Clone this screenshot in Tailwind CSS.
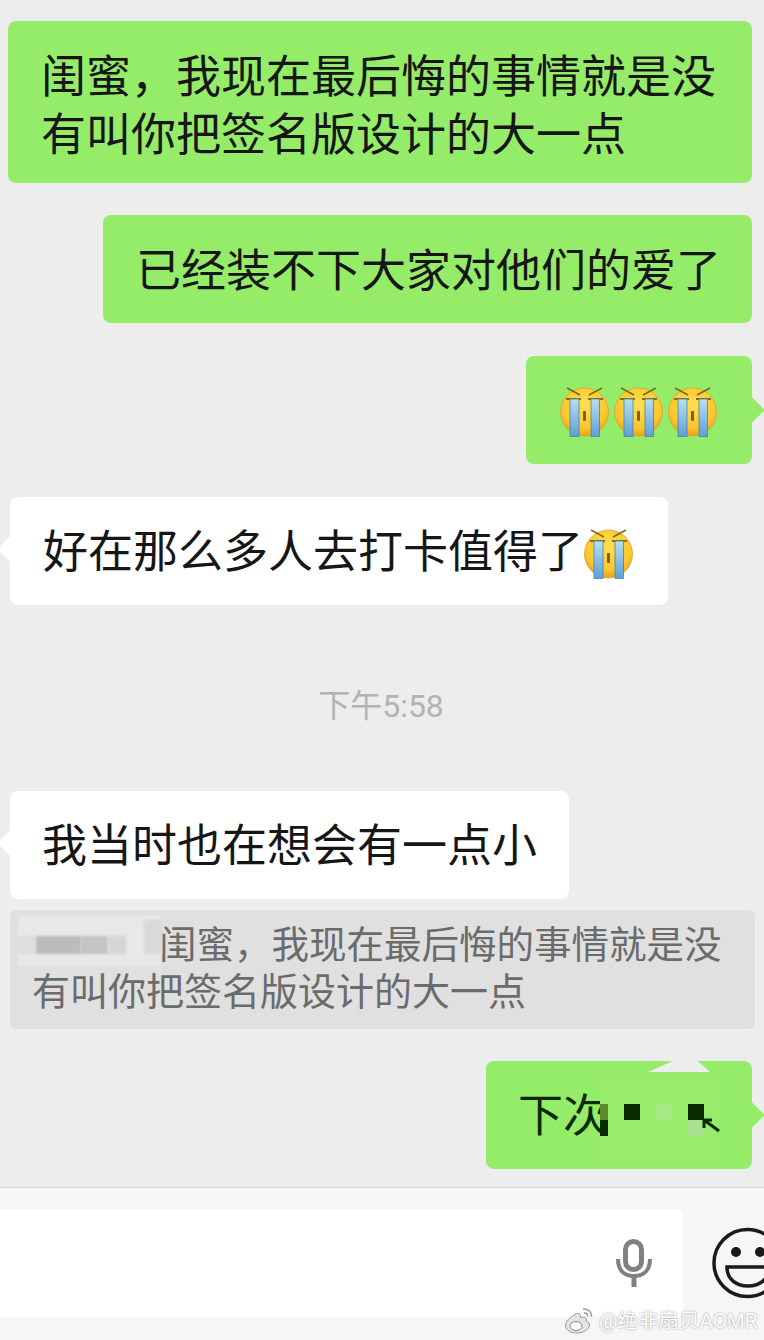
<!DOCTYPE html>
<html lang="zh">
<head>
<meta charset="utf-8"/>
<title>Chat</title>
<script src="https://cdn.jsdelivr.net/npm/@tailwindcss/browser@4"></script>
</head>
<body class="bg-[#ededed] font-['Roboto','Noto_Sans_CJK_SC',sans-serif] text-[#161616]">
<svg class="absolute w-0 h-0">
  <defs>
    <linearGradient id="tear" x1="0" y1="0" x2="0" y2="1">
      <stop offset="0" stop-color="#b9def0"/><stop offset="1" stop-color="#5f9fdc"/>
    </linearGradient>
    <radialGradient id="face" cx="0.5" cy="0.35" r="0.65">
      <stop offset="0" stop-color="#ffe04f"/><stop offset="0.75" stop-color="#fbc52c"/><stop offset="1" stop-color="#ea9f1c"/>
    </radialGradient>
    <symbol id="cry" viewBox="0 0 49 52">
      <circle cx="24.5" cy="27" r="24" fill="url(#face)" stroke="#d9a23a" stroke-width="0.8"/>
      <path d="M7 3l13 7M42 3l-13 7" stroke="#7d6a10" stroke-width="1.6" fill="none"/>
      <path d="M6 14h15M28 14h15" stroke="#6b4a10" stroke-width="1.6" fill="none"/>
      <rect x="10" y="14" width="9" height="37.500" fill="url(#tear)" stroke="#3f8a94" stroke-width="0.8"/>
      <rect x="31" y="14" width="8.500" height="37.500" fill="url(#tear)" stroke="#3f8a94" stroke-width="0.8"/>
      <rect x="23" y="26" width="3" height="10" rx="1" fill="#8a5a10"/>
    </symbol>
  </defs>
</svg>

<div class="w-[764px] h-[1340px] flex flex-col overflow-hidden">
  <main class="h-[1187px] flex flex-col pt-[21px]">

    <div class="self-end mr-[12px] w-[744px] h-[162px] bg-[#95ec69] rounded-lg pl-[33px] pt-[28px] text-[45px] leading-[58px]">
      <p>闺蜜，我现在最后悔的事情就是没</p>
      <p>有叫你把签名版设计的大一点</p>
    </div>

    <div class="self-end mr-[12px] mt-[32px] w-[649px] h-[108px] bg-[#95ec69] rounded-lg pl-[33px] pt-[5px] flex items-center text-[45px]">
      已经装不下大家对他们的爱了
    </div>

    <div class="relative self-end mr-[12px] mt-[33px] w-[226px] h-[108px] bg-[#95ec69] rounded-lg pl-[34px] pt-[2px] flex items-center gap-[5px]">
      <svg class="w-[49px] h-[52px]"><use href="#cry"/></svg>
      <svg class="w-[49px] h-[52px]"><use href="#cry"/></svg>
      <svg class="w-[49px] h-[52px]"><use href="#cry"/></svg>
      <span class="absolute right-[-9px] top-[45px] w-[18px] h-[18px] rotate-45 bg-[#95ec69]"></span>
    </div>

    <div class="relative ml-[10px] mt-[33px] w-[658px] h-[108px] bg-white rounded-lg pl-[33px] pt-[4px] flex items-center text-[45px]">
      好在那么多人去打卡值得了
      <svg class="w-[49px] h-[52px] ml-[1px]"><use href="#cry"/></svg>
      <span class="absolute left-[-9px] top-[43px] w-[18px] h-[18px] rotate-45 bg-white"></span>
    </div>

    <div class="mt-[82px] h-[38px] flex items-center justify-center text-[32px] leading-none text-[#b3b3b3] ml-[-2px]">下午5:58</div>

    <div class="relative ml-[10px] mt-[66px] w-[559px] h-[108px] bg-white rounded-lg pl-[32px] pt-[4px] flex items-center text-[45px]">
      我当时也在想会有一点小
      <span class="absolute left-[-9px] top-[43px] w-[18px] h-[18px] rotate-45 bg-white"></span>
    </div>

    <div class="relative ml-[10px] mt-[11px] w-[745px] h-[119px] bg-[#e0e0e0] rounded-md pl-[22px] pt-[12px] leading-[47px] text-[#6b6b6b]">
      <p class="pl-[127px] text-[37.5px]">闺蜜，我现在最后悔的事情就是没</p>
      <p class="text-[38px]">有叫你把签名版设计的大一点</p>
      <!-- mosaic over the name -->
      <div class="absolute left-[8px] top-[6px] w-[142px] h-[50px] bg-[#e8e8e8] blur-[1px]"></div>
      <div class="absolute left-[8px] top-[26px] w-[18px] h-[18px] bg-[#dedede] blur-[1px]"></div>
      <div class="absolute left-[26px] top-[26px] w-[45px] h-[18px] bg-[#bcbcbc] blur-[1px]"></div>
      <div class="absolute left-[71px] top-[26px] w-[27px] h-[18px] bg-[#c4c4c4] blur-[1px]"></div>
      <div class="absolute left-[98px] top-[26px] w-[18px] h-[18px] bg-[#d6d6d6] blur-[1px]"></div>
      <div class="absolute left-[134px] top-[10px] w-[18px] h-[34px] bg-[#d9d9d9] blur-[1px]"></div>
    </div>

    <div class="relative self-end mr-[12px] mt-[32px] w-[266px] h-[108px] bg-[#95ec69] rounded-lg pl-[32px] pt-[4px] flex items-center text-[45px] text-[#0a2a00]">
      下次
      <span class="absolute right-[-9px] top-[45px] w-[18px] h-[18px] rotate-45 bg-[#95ec69]"></span>
      <!-- mosaic over the rest of the message -->
      <div class="absolute left-[114px] top-[14px] w-[118px] h-[84px] bg-[#97ed6b]"></div>
      <div class="absolute left-[162px] top-0 w-[62px] h-[11px] bg-[#ededed] [clip-path:polygon(40%_0,80%_0,100%_100%,0_100%)]"></div>
      <div class="absolute left-[114px] top-[43px] w-[8px] h-[16px] bg-[#5c8a2a]"></div>
      <div class="absolute left-[114px] top-[59px] w-[8px] h-[16px] bg-[#0a2a00]"></div>
      <div class="absolute left-[138px] top-[43px] w-[16px] h-[16px] bg-[#0a2a00]"></div>
      <div class="absolute left-[170px] top-[43px] w-[16px] h-[16px] bg-[#a6e884]"></div>
      <div class="absolute left-[202px] top-[43px] w-[16px] h-[16px] bg-[#0a2a00]"></div>
      <div class="absolute left-[202px] top-[59px] w-[16px] h-[16px] bg-[#abe08f]"></div>
      <svg class="absolute left-[214px] top-[55px] w-[22px] h-[20px]" viewBox="0 0 22 20"><path d="M4 4l15 11M4 4v8M4 4h8" stroke="#0a2a00" stroke-width="3" fill="none"/></svg>
    </div>
  </main>

  <footer class="relative flex-1 bg-[#f6f6f6] border-t border-[#d9d9d9] pt-[21px]">
    <div class="w-[683px] h-[108px] bg-white rounded-r-md flex items-center justify-end pr-[31px]">
      <svg class="w-[36px] h-[48px]" viewBox="0 0 36 48" fill="none" stroke="#808080">
        <rect x="9.500" y="2.500" width="16" height="28" rx="8" stroke-width="5"/>
        <path d="M2 20c0 11 6 17 16 17s16-6 16-17" stroke-width="4"/>
        <path d="M18 37v11" stroke-width="5"/>
      </svg>
    </div>
    <svg class="absolute left-[712px] top-[38px] w-[74px] h-[74px]" viewBox="0 0 74 74" fill="none">
      <circle cx="35.500" cy="37" r="33.500" stroke="#1a1a1a" stroke-width="3.500"/>
      <circle cx="24" cy="26" r="5" fill="#1a1a1a"/>
      <circle cx="48" cy="26" r="5" fill="#1a1a1a"/>
      <path d="M15 41H57C57 54 47 60 36 60S15 54 15 41z" stroke="#1a1a1a" stroke-width="3.500"/>
    </svg>
    <div class="absolute left-[564px] top-[118px] flex items-center gap-[5px] text-[20.5px] leading-[30px] text-white [text-shadow:0_0_2px_#888]">
      <svg class="w-[30px] h-[26px]" viewBox="0 0 30 26" fill="none" stroke="#fff">
        <path d="M12 6C6 9 1.500 14 1.500 18c0 4 6 7 11 7 7 0 13-4 13-8 0-2.500-2-3.500-3.500-4 1-3-1-5-5-3.500-1 .5-1 0-.5-1.500 0-3-3-3-5-2z" fill="#e4e4e4" stroke="#999"/>
        <ellipse cx="12" cy="18" rx="6" ry="4.500" fill="#fff" stroke="#888"/>
        <path d="M19 1c5-.5 9 3 8.500 8M20 5c2.500-.5 4 1 3.500 3.500" stroke="#999" stroke-width="1.500"/>
      </svg>
      <span>@绝非扇贝AOMR</span>
    </div>
  </footer>
</div>
</body>
</html>
